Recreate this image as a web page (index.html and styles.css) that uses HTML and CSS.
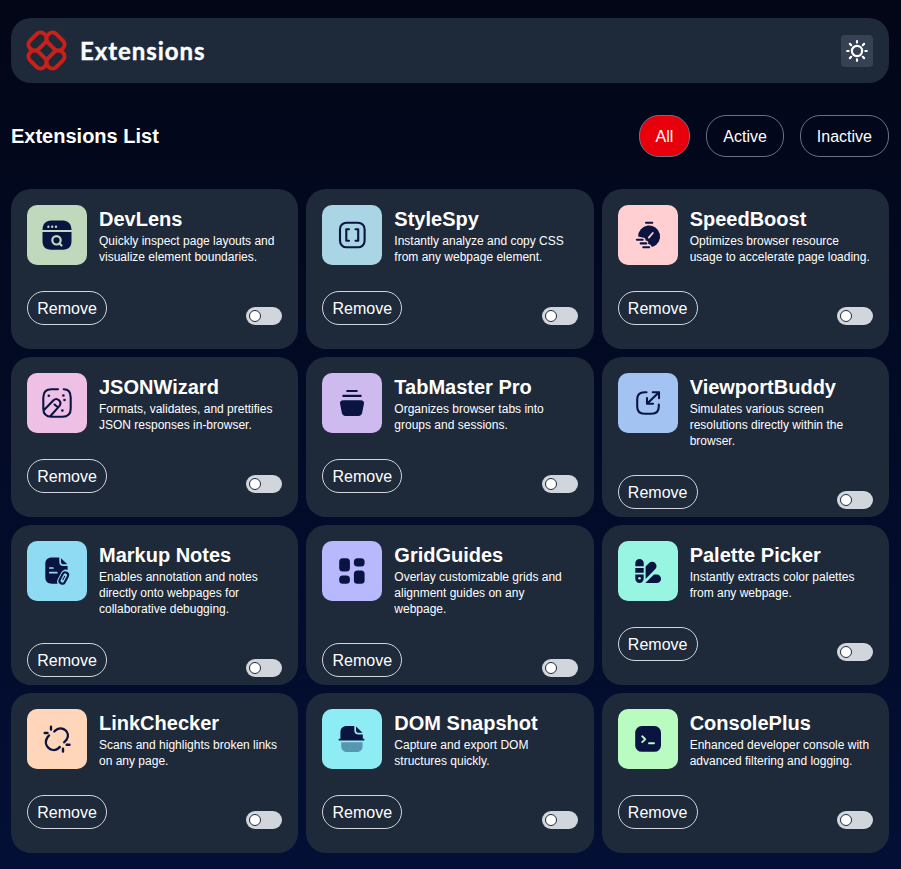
FILE: index.html
```html
<!DOCTYPE html>
<html lang="en">
<head>
<meta charset="utf-8">
<title>Extensions</title>
<link rel="stylesheet" href="styles.css">
</head>
<body>
<header class="topbar">
  <div class="brand">
    <svg class="logo" viewBox="0 0 41 41" fill="none" stroke="#C7221A" stroke-width="4">
      <rect x="1.500" y="5.600" width="20.200" height="12" rx="5.500" transform="rotate(-45 11.600 11.600)"/>
      <rect x="1.500" y="5.600" width="20.200" height="12" rx="5.500" transform="rotate(90 20.500 20.500) rotate(-45 11.600 11.600)"/>
      <rect x="1.500" y="5.600" width="20.200" height="12" rx="5.500" transform="rotate(180 20.500 20.500) rotate(-45 11.600 11.600)"/>
      <rect x="1.500" y="5.600" width="20.200" height="12" rx="5.500" transform="rotate(270 20.500 20.500) rotate(-45 11.600 11.600)"/>
    </svg>
    <span class="brand-name">Extensions</span>
  </div>
  <button class="theme" aria-label="Toggle theme">
    <svg viewBox="0 0 22 22" fill="none" stroke="#fff" stroke-width="2.2" stroke-linecap="round"><circle cx="11" cy="11" r="5.1"/><path d="M11 1.200v1.400M11 19.400v1.400M1.200 11h1.400M19.400 11h1.400M3.900 3.900l1.300 1.300M16.800 16.800l1.300 1.300M3.900 18.100l1.300-1.300M16.800 5.200l1.300-1.300"/></svg>
  </button>
</header>
<section class="toolbar">
  <h1>Extensions List</h1>
  <nav class="filters">
    <button class="filter active">All</button>
    <button class="filter">Active</button>
    <button class="filter">Inactive</button>
  </nav>
</section>
<main class="grid">
  <article class="card">
    <div class="info">
      <svg class="icon" viewBox="0 0 60 60"><rect width="60" height="60" rx="10" fill="#C0D8BC"/><path class="f" d="M15.5 25C15.5 19 19 15.6 24 15.6h12c5 0 8.500 3.400 8.500 9.400zM15.500 27h29v9c0 5.500-3 8.700-8.500 8.700H24c-5.500 0-8.500-3.200-8.500-8.700z"/><g fill="#C0D8BC"><circle cx="21.400" cy="21.800" r="1.200"/><circle cx="25.200" cy="21.800" r="1.200"/><circle cx="29" cy="21.800" r="1.200"/></g><g fill="none" stroke="#C0D8BC" stroke-width="2.200" stroke-linecap="round"><circle cx="29.500" cy="35.300" r="4.200"/><path d="M32.500 38.500l2 2"/></g></svg>
      <div><h2>DevLens</h2><p>Quickly inspect page layouts and visualize element boundaries.</p></div>
    </div>
    <div class="actions"><button class="remove">Remove</button><span class="switch"></span></div>
  </article>
  <article class="card">
    <div class="info">
      <svg class="icon" viewBox="0 0 60 60"><rect width="60" height="60" rx="10" fill="#A9D5E5"/><rect class="s" x="18" y="17.700" width="24.600" height="24.600" rx="6.500"/><path class="s" d="M27 24.300h-2.700v11.400H27M33.500 24.300h2.700v11.400h-2.700"/></svg>
      <div><h2>StyleSpy</h2><p>Instantly analyze and copy CSS from any webpage element.</p></div>
    </div>
    <div class="actions"><button class="remove">Remove</button><span class="switch"></span></div>
  </article>
  <article class="card">
    <div class="info">
      <svg class="icon" viewBox="0 0 60 60"><rect width="60" height="60" rx="10" fill="#FFCFD2"/><path class="f" d="M20.100 31.500a11 11 0 1 1 14.600 10.300c-1 .3-1.300-.6-1.700-1.300-.6-1-1.800-1.500-3-1.500 1-2-.3-3.400-2.500-3.500.3-2.200-1-3-3-3z"/><path class="s" d="M28 17.700h6.300M18.900 34.800h5.800M22.700 38.400h5.600M25.300 42.300h5.800"/><path d="M30.800 32.600l4-4.600" fill="none" stroke="#FFCFD2" stroke-width="1.800" stroke-linecap="round"/></svg>
      <div><h2>SpeedBoost</h2><p>Optimizes browser resource usage to accelerate page loading.</p></div>
    </div>
    <div class="actions"><button class="remove">Remove</button><span class="switch"></span></div>
  </article>
  <article class="card">
    <div class="info">
      <svg class="icon" viewBox="0 0 60 60"><rect width="60" height="60" rx="10" fill="#EFC0E6"/><path class="s" d="M31 16.300h-6.500c-5.500 0-8.200 2.700-8.200 8.200v11c0 5.500 2.700 8.200 8.200 8.200h11c5.500 0 8.200-2.700 8.200-8.200v-11c0-5.500-2-8.200-7-8.200M17 37l9.500-9.800c3.500-3.200 9 1.500 6 5.700L23.500 43M27.500 31.500l3.500 3"/><g class="f"><circle cx="21.800" cy="22.700" r="1.300"/><circle cx="36.400" cy="22.500" r="1.300"/><circle cx="37.500" cy="27" r="1.300"/><circle cx="35.400" cy="37.500" r="1.300"/></g></svg>
      <div><h2>JSONWizard</h2><p>Formats, validates, and prettifies JSON responses in-browser.</p></div>
    </div>
    <div class="actions"><button class="remove">Remove</button><span class="switch"></span></div>
  </article>
  <article class="card">
    <div class="info">
      <svg class="icon" viewBox="0 0 60 60"><rect width="60" height="60" rx="10" fill="#CFBAF0"/><path class="s" d="M25.200 18h9.600M21.300 22.900h17.400"/><path class="f" d="M21.500 27.200h17c2.800 0 3.900 1.500 3.400 3.800l-1.700 8.500c-.5 2.300-1.500 3.500-3.800 3.500H23.600c-2.300 0-3.300-1.200-3.800-3.500L18.100 31c-.5-2.300.6-3.800 3.400-3.800z"/></svg>
      <div><h2>TabMaster Pro</h2><p>Organizes browser tabs into groups and sessions.</p></div>
    </div>
    <div class="actions"><button class="remove">Remove</button><span class="switch"></span></div>
  </article>
  <article class="card">
    <div class="info">
      <svg class="icon" viewBox="0 0 60 60"><rect width="60" height="60" rx="10" fill="#A3C4F3"/><path class="s" d="M28.500 19.200h-2c-5 0-7.300 2.300-7.300 7.300v7c0 5 2.300 7.300 7.300 7.300h7c5 0 7.300-2.300 7.300-7.300v-2M29.500 30.300L41 19.200M34.800 19.200H41v6M29 25v5.800h6"/></svg>
      <div><h2>ViewportBuddy</h2><p>Simulates various screen resolutions directly within the browser.</p></div>
    </div>
    <div class="actions"><button class="remove">Remove</button><span class="switch"></span></div>
  </article>
  <article class="card">
    <div class="info">
      <svg class="icon" viewBox="0 0 60 60"><rect width="60" height="60" rx="10" fill="#90DBF4"/><path class="f" d="M25 16.400h7.300v4.700c0 2.500 1.500 4 4 4h4.300v3.800L31.500 42.700H25c-4.500 0-6.700-2.200-6.700-6.700v-13c0-4.400 2.200-6.600 6.700-6.600zM34 17.200l6.300 6.100h-3.500c-1.900 0-2.800-.8-2.800-2.600z"/><path d="M22.800 27h3.200M22.800 31.700h7" fill="none" stroke="#90DBF4" stroke-width="1.700" stroke-linecap="round"/><g transform="rotate(28 36.800 37)"><rect x="32" y="28" width="9.600" height="18" rx="4.800" fill="#90DBF4"/><rect class="s" x="34" y="31" width="5.600" height="12" rx="2.800"/><path class="s thin" d="M36.800 35v4"/></g></svg>
      <div><h2>Markup Notes</h2><p>Enables annotation and notes directly onto webpages for collaborative debugging.</p></div>
    </div>
    <div class="actions"><button class="remove">Remove</button><span class="switch"></span></div>
  </article>
  <article class="card">
    <div class="info">
      <svg class="icon" viewBox="0 0 60 60"><rect width="60" height="60" rx="10" fill="#B8B8FF"/><g class="f"><rect x="17.200" y="17.200" width="10.700" height="13.300" rx="3.500"/><rect x="17.200" y="34.500" width="10.700" height="8.300" rx="3.500"/><rect x="31.900" y="17.200" width="10.700" height="8.300" rx="3.500"/><rect x="31.900" y="29.500" width="10.700" height="13.300" rx="3.500"/></g></svg>
      <div><h2>GridGuides</h2><p>Overlay customizable grids and alignment guides on any webpage.</p></div>
    </div>
    <div class="actions"><button class="remove">Remove</button><span class="switch"></span></div>
  </article>
  <article class="card">
    <div class="info">
      <svg class="icon" viewBox="0 0 60 60"><rect width="60" height="60" rx="10" fill="#98F5E1"/><path class="f" d="M17.300 25.200v-3a4.200 4.200 0 0 1 8.400 0v3zM17.300 27h8.400v4.800h-8.400zM17.300 33.600h8.400v4.200a4.200 4.200 0 0 1-8.400 0zM27.600 38V25.600l3.500-3.500a4.300 4.300 0 0 1 6.200 6zM27.300 42l8.700-8.500h2.800a4.250 4.250 0 0 1 0 8.500z"/><circle cx="21.500" cy="37.300" r="1.300" fill="#98F5E1"/></svg>
      <div><h2>Palette Picker</h2><p>Instantly extracts color palettes from any webpage.</p></div>
    </div>
    <div class="actions"><button class="remove">Remove</button><span class="switch"></span></div>
  </article>
  <article class="card">
    <div class="info">
      <svg class="icon" viewBox="0 0 60 60"><rect width="60" height="60" rx="10" fill="#FFD6BA"/><path class="s bold" d="M27.300 22.500l1.200-1.200c6.500-5.500 16 2 11 9.500l-2.300 2.500M22 26.500l-1.500 1.700c-5.500 8 4.300 16.500 11 11l1.300-1.200M24 17.700V20.500M17.700 24h2.800M39.700 35.800h2.800M36 39.700v2.800"/></svg>
      <div><h2>LinkChecker</h2><p>Scans and highlights broken links on any page.</p></div>
    </div>
    <div class="actions"><button class="remove">Remove</button><span class="switch"></span></div>
  </article>
  <article class="card">
    <div class="info">
      <svg class="icon" viewBox="0 0 60 60"><rect width="60" height="60" rx="10" fill="#8EECF5"/><path class="f" d="M25 17h7.300v4.500c0 2.500 1.500 4 4 4h4.500v4.300h1.500v1.800H16.700v-1.800h1.700V23.500c0-4.300 2.300-6.500 6.600-6.500zM34 17.500l6.500 6.200H37c-2 0-3-.8-3-2.800z"/><path class="under" d="M19.200 33.200h21.400v3.500c0 4-2.300 6.300-6.300 6.300h-8.800c-4 0-6.300-2.300-6.300-6.300z"/></svg>
      <div><h2>DOM Snapshot</h2><p>Capture and export DOM structures quickly.</p></div>
    </div>
    <div class="actions"><button class="remove">Remove</button><span class="switch"></span></div>
  </article>
  <article class="card">
    <div class="info">
      <svg class="icon" viewBox="0 0 60 60"><rect width="60" height="60" rx="10" fill="#B9FBC0"/><rect class="f" x="17.200" y="17" width="25.800" height="25.800" rx="6.500"/><path d="M24.200 27.300l3 2.900-3 2.900M31 34.200h5" fill="none" stroke="#B9FBC0" stroke-width="1.900" stroke-linecap="round" stroke-linejoin="round"/></svg>
      <div><h2>ConsolePlus</h2><p>Enhanced developer console with advanced filtering and logging.</p></div>
    </div>
    <div class="actions"><button class="remove">Remove</button><span class="switch"></span></div>
  </article>
</main>
</body>
</html>
```
FILE: styles.css
```css
*, *::before { box-sizing: border-box; }
body {
  margin: 0;
  height: 869px;
  padding: 18px 12px 0 11px;
  font-family: "Liberation Sans", Arial, sans-serif;
  color: #fff;
  background: linear-gradient(180deg, #020617, #030f35);
}
h1, h2, p { margin: 0; }
button { font: inherit; color: inherit; background: none; padding: 0; }
.topbar {
  display: flex;
  align-items: center;
  justify-content: space-between;
  height: 65px;
  padding: 0 16px 0 15px;
  border-radius: 20px;
  background: #1e2939;
}
.brand { display: flex; align-items: center; gap: 13px; }
.logo { width: 41px; height: 41px; display: block; }
.brand-name {
  font: 700 24px/32px Lato, sans-serif;
  letter-spacing: 0.95px;
  -webkit-text-stroke: 0.4px #fbfdfe;
  color: #fbfdfe;
}
.theme {
  width: 32px;
  height: 32px;
  display: grid;
  place-items: center;
  border: 0;
  border-radius: 4px;
  background: #364153;
}
.theme svg { width: 22px; height: 22px; }
.toolbar {
  display: flex;
  align-items: center;
  justify-content: space-between;
  margin: 32px 0;
}
h1 { font-size: 20px; line-height: 28px; }
.filters { display: flex; gap: 16px; }
.filter {
  height: 42px;
  padding: 2px 16px 0;
  border: 1px solid #6a7282;
  border-radius: 20px;
  font-size: 16px;
}
.filter.active { background: #e7000b; }
.grid {
  display: grid;
  grid-template-columns: repeat(3, 1fr);
  grid-auto-rows: 160px;
  gap: 8px;
}
.card {
  padding: 16px;
  border-radius: 20px;
  background: #1e2939;
}
.info { display: flex; gap: 12px; }
.icon { width: 60px; height: 60px; flex: none; }
.f { fill: #091540; }
.under { fill: #5796b0; }
.s {
  fill: none;
  stroke: #091540;
  stroke-width: 2.1;
  stroke-linecap: round;
  stroke-linejoin: round;
}
.s.bold { stroke-width: 2.4; }
.s.thin { stroke-width: 1; }
h2 { font-size: 20px; line-height: 28px; }
p { font-size: 12px; line-height: 16px; }
.actions {
  display: flex;
  align-items: flex-end;
  justify-content: space-between;
  margin-top: 26px;
}
.remove {
  width: 80px;
  height: 34px;
  padding-top: 2px;
  border: 1px solid #d1d5dc;
  border-radius: 17px;
  font-size: 16px;
}
.switch {
  display: flex;
  align-items: center;
  width: 36px;
  height: 18px;
  padding-left: 3px;
  border-radius: 9px;
  background: #d1d5dc;
}
.switch::before {
  content: "";
  width: 12px;
  height: 12px;
  border: 1px solid #1e2939;
  border-radius: 50%;
  background: #fff;
}
```
